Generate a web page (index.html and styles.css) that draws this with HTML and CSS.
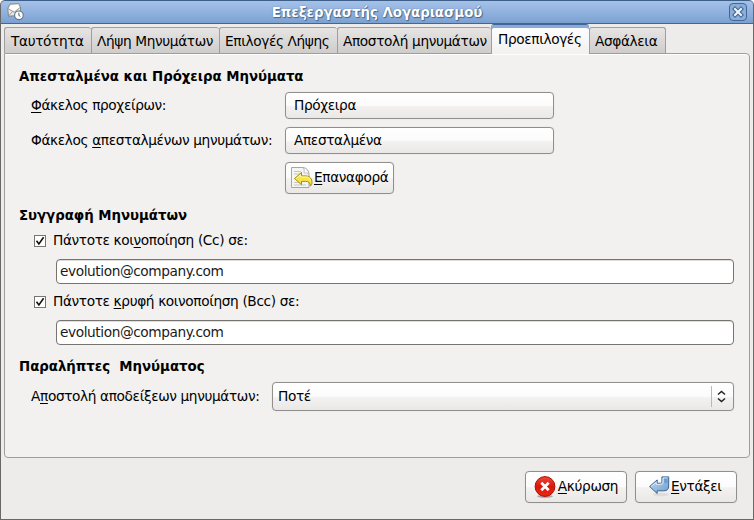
FILE: index.html
```html
<!DOCTYPE html>
<html lang="el">
<head>
<meta charset="utf-8">
<title>Επεξεργαστής Λογαριασμού</title>
<link rel="stylesheet" href="styles.css">
</head>
<body>
<div class="window">
  <header class="titlebar">
    <svg class="app-icon" width="17" height="18" viewBox="0 0 17 18">
      <path d="M.8 5.3 3 1.2 11.6.6 13.5 4v8.5l-12 .6z" fill="#e9e9e5" stroke="#777872" stroke-width=".8"/>
      <path d="M3.4 2.2 11 1.8l1.6 3-5 3.8L2.2 6z" fill="#fff"/>
      <path d="m1.2 5.7 6 3.5 6-4.8M1.7 12.7l4-4.2" fill="none" stroke="#8f918c" stroke-width=".9"/>
      <circle cx="11.9" cy="12.3" r="4.3" fill="#fff" stroke="#60718a" stroke-width="1.1"/>
      <path d="M11.9 9.7v2.8l1.5.8" fill="none" stroke="#4d5d76"/>
    </svg>
    <h1>Επεξεργαστής Λογαριασμού</h1>
    <button class="close" aria-label="Κλείσιμο">
      <svg width="12" height="12" viewBox="0 0 12 12"><path d="m3 3 6 6m0-6L3 9" stroke="#426797" stroke-width="4.2" stroke-linecap="square"/><path d="m3 3 6 6m0-6L3 9" stroke="#f2f5fa" stroke-width="2" stroke-linecap="square"/></svg>
    </button>
  </header>
  <nav class="tabs">
    <div class="tab t1">Ταυτότητα</div>
    <div class="tab t2">Λήψη Μηνυμάτων</div>
    <div class="tab t3">Επιλογές Λήψης</div>
    <div class="tab t4">Αποστολή μηνυμάτων</div>
    <div class="tab t5 active">Προεπιλογές</div>
    <div class="tab t6">Ασφάλεια</div>
  </nav>
  <main class="panel">
    <h2>Απεσταλμένα και Πρόχειρα Μηνύματα</h2>
    <div class="folders">
      <span class="label"><u>Φ</u>άκελος προχείρων:</span>
      <button class="btn folder">Πρόχειρα</button>
      <span class="label">Φάκελος <u>α</u>πεσταλμένων μηνυμάτων:</span>
      <button class="btn folder">Απεσταλμένα</button>
      <button class="btn action reset">
        <svg width="22" height="22" viewBox="0 0 22 22">
          <path d="M.5.5H12q6 1 6 7v13H.5z" fill="#f5f5f3" stroke="#a5a7a2"/>
          <path d="M3 4.5h7M3 7h6M3 15.5h5M3 18h12" stroke="#c5c7c2"/>
          <path d="M12 .5q2 2 1 5.5 4-1 5 2" fill="#fff" stroke="#b5b7b2" stroke-width=".8"/>
          <path d="m3.5 11.5 7-6v3.4H15c4 .2 6 3.2 6 6.5 0 1.7-.6 2.8-1.6 3.6-.2-3.4-1.6-4.6-4.9-4.6h-4v3.3z" fill="#f5e548" stroke="#a78e08" stroke-linejoin="round"/>
          <path d="m5.3 11.5 4.3-3.7V10H15c2.7.2 4 1.5 4.6 3.2" fill="none" stroke="#fff9a5"/>
        </svg><span><u>Ε</u>παναφορά</span>
      </button>
    </div>
    <h2>Συγγραφή Μηνυμάτων</h2>
    <label class="check"><span class="box"><svg width="10" height="10" viewBox="0 0 10 10"><path d="m1.5 4.8 2.4 3.2L8.6 1.3" fill="none" stroke="#111" stroke-width="1.6"/></svg></span><span>Πάντοτε κοι<u>ν</u>οποίηση (Cc) σε:</span></label>
    <div class="entry">evolution@company.com</div>
    <label class="check"><span class="box"><svg width="10" height="10" viewBox="0 0 10 10"><path d="m1.5 4.8 2.4 3.2L8.6 1.3" fill="none" stroke="#111" stroke-width="1.6"/></svg></span><span>Πάντοτε <u>κ</u>ρυφή κοινοποίηση (Bcc) σε:</span></label>
    <div class="entry">evolution@company.com</div>
    <h2 class="recipients">Παραλήπτες&nbsp; Μηνύματος</h2>
    <div class="receipts">
      <span class="label">Α<u>π</u>οστολή αποδείξεων μηνυμάτων:</span>
      <div class="btn combo"><span>Ποτέ</span><span class="arrows"><svg width="9" height="13" viewBox="0 0 9 13"><path d="m1 4.5 3.5-3L8 4.5M1 8.5l3.5 3 3.5-3" fill="none" stroke="#222" stroke-width="1.5"/></svg></span></div>
    </div>
  </main>
  <footer class="actions">
    <button class="btn action">
      <svg width="22" height="22" viewBox="0 0 22 22">
        <defs><linearGradient id="red" x2="0" y2="1"><stop stop-color="#ed4a3a"/><stop offset=".5" stop-color="#dc1608"/><stop offset="1" stop-color="#e62b10"/></linearGradient></defs>
        <ellipse cx="11" cy="20.3" rx="8" ry="1.6" fill="#aaa"/>
        <circle cx="11" cy="10.5" r="9.9" fill="url(#red)" stroke="#ae0d05"/>
        <path d="m7.3 6.8 7.4 7.4m0-7.4-7.4 7.4" stroke="#fff" stroke-width="2.7"/>
      </svg><span><u>Α</u>κύρωση</span>
    </button>
    <button class="btn action ok">
      <svg width="22" height="22" viewBox="0 0 22 22">
        <defs><linearGradient id="blue" x2="1" y2="1"><stop stop-color="#c8ddf0"/><stop offset="1" stop-color="#6c9bcb"/></linearGradient></defs>
        <ellipse cx="12" cy="18.5" rx="8" ry="1.8" fill="#ddd"/>
        <path d="m.6 10.5 7.6-6.6v3.3h3.3c1 0 1.4-.5 1.4-1.5V.9h6.8v9.2c0 3.2-1.6 4.7-5 4.7H8.2v2.7z" fill="url(#blue)" stroke="#386595" stroke-linejoin="round"/>
        <path d="m2.4 10.3 4.8-4.1v2.1h5c1.3-.2 1.8-1 1.8-2.3V2h4.6" fill="none" stroke="#e5f0fa" stroke-width=".9"/>
        <path d="M14.8 2.6h3.8v4l-3 1.2z" fill="#6e9dcc"/>
      </svg><span><u>Ε</u>ντάξει</span>
    </button>
  </footer>
</div>
</body>
</html>
```
FILE: styles.css
```css
* { box-sizing: border-box; }
body {
  margin: 0;
  background: #fff;
  color: #000;
  font: 13.7px/16px "DejaVu Sans", sans-serif;
  letter-spacing: -.37px;
  white-space: nowrap;
}
h1, h2 { margin: 0; font: bold 13.33px/16px "DejaVu Sans", sans-serif; letter-spacing: -.02px; }
button { font: inherit; letter-spacing: inherit; color: inherit; margin: 0; }
svg { display: block; flex: none; }
u { text-decoration-thickness: 1px; text-underline-offset: 2px; text-decoration-skip-ink: none; }
.window {
  width: 754px;
  height: 520px;
  background: #edeceb;
  border: 1px solid #6a6866;
  border-top: 0;
  border-radius: 5px 5px 0 0;
  overflow: hidden;
}
.titlebar {
  display: flex;
  align-items: center;
  height: 24px;
  margin: 0 -1px;
  padding: 0 6px;
  border: 1px solid #3f5f8b;
  border-bottom-color: #426797;
  border-radius: 5px 5px 0 0;
  background: linear-gradient(#a5c1e8, #91b2df 50%, #7ba1d1);
}
.titlebar h1 { flex: 1; padding: 1px 0 0 1px; text-align: center; color: #fff; text-shadow: 0 0 1px #35567f, 1px 1px 1px #45688f; }
.close {
  display: grid;
  place-items: center;
  width: 18px;
  height: 18px;
  padding: 0;
  border: 1px solid #426797;
  border-radius: 4px;
  background: #8badd9;
}
.tabs { display: flex; align-items: flex-end; height: 29px; margin-left: 3px; }
.tab {
  height: 26px;
  padding: 5px 0 0 6px;
  border: 1px solid #a09e9c;
  border-width: 1px 0 0 1px;
  background: linear-gradient(#e6e5e4, #cfcdcb);
  border-radius: 3px 3px 0 0;
}
.t1 { width: 87px; }
.t2 { width: 128px; padding-left: 5px; }
.t3 { width: 118px; padding-left: 5px; }
.t4 { width: 154px; padding-left: 5px; }
.t5 { width: 98px; }
.t6 { width: 77px; padding-left: 5px; border-right-width: 1px; }
.tab.active {
  height: 30px;
  margin-bottom: -1px;
  border-top: 1px solid #426797;
  box-shadow: inset 0 3px #89abd8;
  background: linear-gradient(#fff, #f2f1f0);
  padding-top: 6px;
  position: relative;
}
.panel {
  width: 746px;
  height: 405px;
  margin-left: 3px;
  padding: 15px 15px 0 14px;
  border: 1px solid #a09e9c;
  border-radius: 0 4px 4px 4px;
  background: #f2f1f0;
  box-shadow: inset 0 1px #fff;
}
.folders {
  display: grid;
  grid-template-columns: 254px 269px;
  grid-template-rows: 27px 27px 32px;
  row-gap: 8px;
  align-items: center;
  margin: 7px 0 14px 12px;
}
.label { padding-bottom: 2px; }
.btn {
  border: 1px solid #918f8c;
  border-radius: 4px;
  background: linear-gradient(#fff, #fbfbfb 50%, #f3f2f1 52%, #e9e8e6);
  box-shadow: 0 0 1px #c9c7c5;
}
.folder { height: 27px; padding: 0 8px 2px; text-align: left; }
.action { display: flex; align-items: center; justify-content: center; height: 32px; width: 102px; padding: 0; gap: 2px; }
.action span { padding-bottom: 2px; }
.reset { grid-column: 2; width: 109px; justify-content: flex-start; padding-left: 5px; gap: 1px; }
.ok { justify-content: flex-start; padding-left: 13px; gap: 0; }
.check { display: flex; align-items: center; height: 16px; margin: 9px 0 10px 15px; }
.check > span:last-child { padding-bottom: 2px; }
.box { width: 12px; height: 12px; margin-right: 7px; border: 1px solid #777571; background: #fff; }
.entry {
  width: 678px;
  height: 25px;
  margin-left: 37px;
  padding: 3px 3px;
  border: 1px solid #777470;
  border-radius: 4px;
  background: #fff;
  color: #1a1a1a;
  letter-spacing: -.41px;
  box-shadow: inset 0 1px #dedddc;
}
.entry + .check { margin-top: 10px; }
.recipients { margin-top: 14px; }
.receipts { display: flex; align-items: center; margin: 7px 0 0 12px; }
.receipts .label { width: 241px; }
.combo { display: flex; align-items: center; justify-content: space-between; width: 462px; height: 29px; padding: 0 7px 0 5px; }
.combo > span:first-child { padding-bottom: 2px; }
.arrows { height: 21px; padding: 4px 0 0 5px; border-left: 1px solid #bbb9b7; }
.actions { display: flex; justify-content: flex-end; gap: 8px; padding: 13px 16px 0; }
```
